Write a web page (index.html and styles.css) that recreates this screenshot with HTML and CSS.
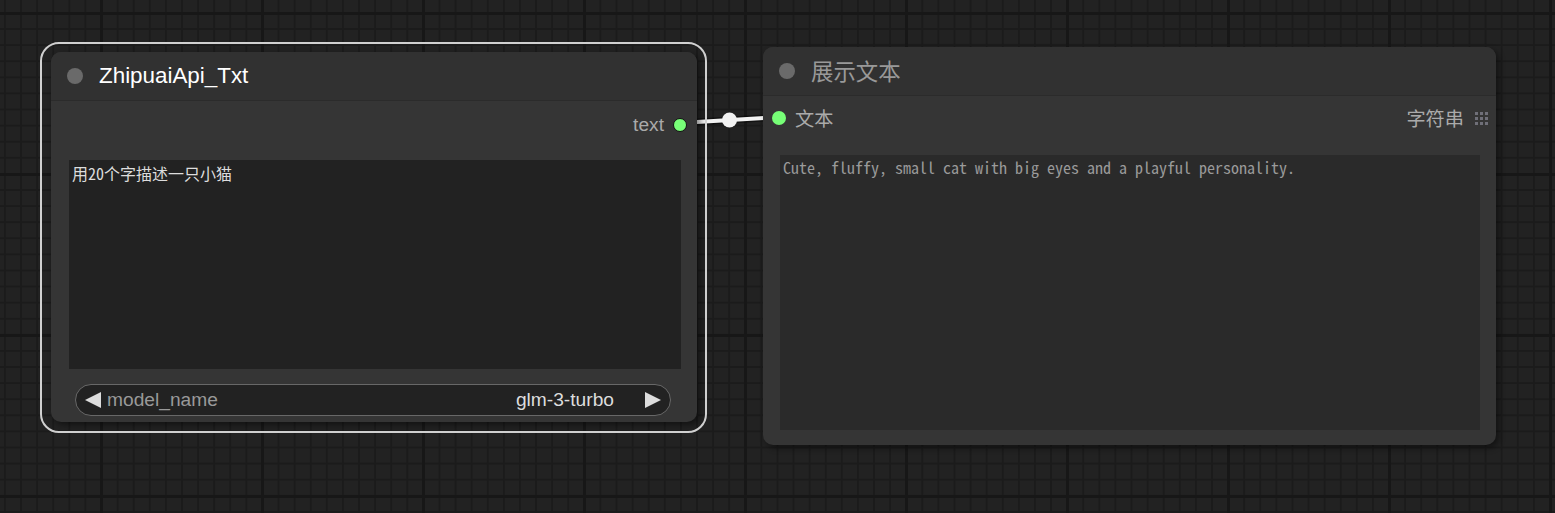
FILE: index.html
```html
<!DOCTYPE html>
<html lang="zh">
<head>
<meta charset="utf-8">
<title>ComfyUI</title>
<link rel="stylesheet" href="styles.css">
</head>
<body>
<div class="canvas">
  <svg class="links" width="1555" height="513" viewBox="0 0 1555 513">
    <line x1="680" y1="123" x2="779" y2="117" stroke="rgba(0,0,0,0.45)" stroke-width="7"/>
    <line x1="680" y1="123" x2="779" y2="117" stroke="#f2f2f2" stroke-width="4"/>
    <circle cx="729.5" cy="120" r="7.5" fill="#f2f2f2"/>
  </svg>

  <div class="node node-a">
    <div class="sel-outline"></div>
    <div class="title">
      <span class="title-dot"></span>
      <span class="title-text selected">ZhipuaiApi_Txt</span>
    </div>
    <div class="slot-row out-row">
      <span class="slot-label">text</span>
      <span class="slot-dot out"></span>
    </div>
    <div class="textarea">用20个字描述一只小猫</div>
    <div class="combo">
      <svg class="arrow" width="16" height="16" viewBox="0 0 16 16"><polygon points="16,0 16,16 0,8" fill="#ddd"/></svg>
      <span class="combo-name">model_name</span>
      <span class="combo-value">glm-3-turbo</span>
      <svg class="arrow" width="16" height="16" viewBox="0 0 16 16"><polygon points="0,0 0,16 16,8" fill="#ddd"/></svg>
    </div>
  </div>

  <div class="node node-b">
    <div class="title">
      <span class="title-dot"></span>
      <span class="title-text">展示文本</span>
    </div>
    <div class="slot-row in-row">
      <span class="slot-dot in"></span>
      <span class="slot-label">文本</span>
      <span class="spacer"></span>
      <span class="slot-label">字符串</span>
      <svg class="grid-icon" width="13" height="13" viewBox="0 0 13 13">
        <rect x="0" y="0" width="3" height="3"/><rect x="5" y="0" width="3" height="3"/><rect x="10" y="0" width="3" height="3"/>
        <rect x="0" y="5" width="3" height="3"/><rect x="5" y="5" width="3" height="3"/><rect x="10" y="5" width="3" height="3"/>
        <rect x="0" y="10" width="3" height="3"/><rect x="5" y="10" width="3" height="3"/><rect x="10" y="10" width="3" height="3"/>
      </svg>
    </div>
    <div class="textarea readonly">Cute, fluffy, small cat with big eyes and a playful personality.</div>
  </div>
</div>
</body>
</html>
```

FILE: styles.css
```css
html, body {
  margin: 0;
  padding: 0;
}
body {
  width: 1555px;
  height: 513px;
  overflow: hidden;
  background-color: #222222;
  background-image:
    linear-gradient(to right, #171717 0 3px, transparent 3px),
    linear-gradient(to bottom, #171717 0 3px, transparent 3px),
    linear-gradient(to right, #1b1b1b 0 2px, transparent 2px),
    linear-gradient(to bottom, #1b1b1b 0 2px, transparent 2px);
  background-size: 161px 161px, 161px 161px, 16.1px 16.1px, 16.1px 16.1px;
  background-position: 100px 0, 0 12px, 4px 0, 0 12px;
  font-family: "Liberation Sans", Arial, sans-serif;
}
.canvas {
  position: relative;
  width: 1555px;
  height: 513px;
}
.links {
  position: absolute;
  left: 0;
  top: 0;
}
.node {
  position: absolute;
  background: #353535;
  border-radius: 10px;
  box-shadow: 3px 3px 6px rgba(0, 0, 0, 0.45);
  display: flex;
  flex-direction: column;
}
.node-a {
  left: 51px;
  top: 52px;
  width: 646px;
  height: 370px;
}
.node-b {
  left: 763px;
  top: 47px;
  width: 733px;
  height: 398px;
}
.sel-outline {
  position: absolute;
  left: -11px;
  top: -10px;
  right: -10px;
  bottom: -11px;
  border: 2px solid #d0d0d0;
  border-radius: 19px;
  pointer-events: none;
}
.title {
  height: 48px;
  flex: none;
  display: flex;
  align-items: center;
  background: #313131;
  border-radius: 10px 10px 0 0;
  border-bottom: 1px solid #2b2b2b;
}
.title-dot {
  width: 16px;
  height: 16px;
  border-radius: 50%;
  background: #6a6a6a;
  margin-left: 16px;
  margin-right: 16px;
  flex: none;
}
.title-text {
  font-size: 22.4px;
  color: #999999;
  font-family: "Liberation Sans", "Noto Sans CJK SC", sans-serif;
}
.node-b .title-text {
  margin-top: -2px;
}
.title-text.selected {
  color: #ffffff;
}
.slot-row {
  height: 44px;
  flex: none;
  display: flex;
  align-items: center;
  margin-top: 1px;
}
.slot-label {
  font-size: 19.2px;
  color: #aaaaaa;
  font-family: "Liberation Sans", "Noto Sans CJK SC", sans-serif;
}
.out-row {
  justify-content: flex-end;
  padding-right: 10px;
  margin-top: 2px;
}
.out-row .slot-label {
  margin-right: 9px;
}
.slot-dot {
  width: 14px;
  height: 14px;
  border-radius: 50%;
  background: #7f7;
  box-sizing: border-box;
  flex: none;
}
.slot-dot.out {
  border: 1.5px solid #111;
}
.in-row {
  padding-left: 9px;
  padding-right: 8px;
  margin-top: 0;
}
.in-row .slot-dot {
  margin-right: 9px;
}
.spacer {
  flex: 1;
}
.grid-icon {
  margin-left: 11px;
  fill: #6f6f78;
}
.textarea {
  flex: none;
  box-sizing: border-box;
  background: #222222;
  color: #dddddd;
  font-family: "Noto Sans Mono CJK SC", "Noto Sans CJK SC", monospace;
  font-size: 16px;
  line-height: 20px;
  padding: 3px 3px;
  white-space: pre-wrap;
}
.node-a .textarea {
  margin: 13px 16px 0 18px;
  height: 209px;
}
.node-b .textarea {
  margin: 15px 16px 0 17px;
  height: 275px;
}
.textarea.readonly {
  background: #2a2a2a;
  color: #9a9a9a;
  padding-top: 2px;
}
.combo {
  flex: none;
  margin: 15px 26px 0 24px;
  height: 32px;
  box-sizing: border-box;
  border: 1px solid #686868;
  border-radius: 16px;
  background: #222222;
  display: flex;
  align-items: center;
  padding: 0 9px 0 9px;
}
.arrow {
  flex: none;
}
.combo-name {
  margin-left: 6px;
  font-size: 19.2px;
  color: #999999;
  flex: 1;
}
.combo-value {
  font-size: 19.2px;
  color: #dddddd;
  margin-right: 31px;
}
```
